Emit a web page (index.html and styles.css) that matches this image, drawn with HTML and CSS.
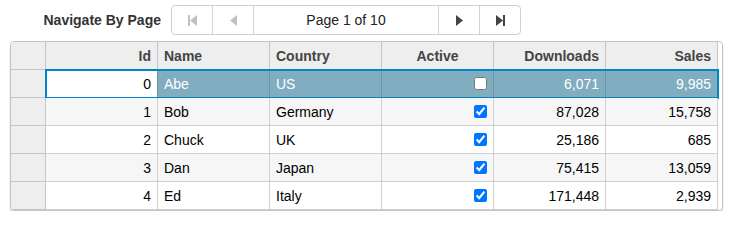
FILE: index.html
```html
<!DOCTYPE html>
<html lang="en">
<head>
<meta charset="utf-8">
<title>FlexGrid paging</title>
<link rel="stylesheet" href="styles.css">
</head>
<body>
<div class="toolbar">
  <div class="label">Navigate By Page</div>
  <div class="pager">
    <button class="btn disabled" type="button" aria-label="First page">
      <svg width="9" height="11" viewBox="0 0 9 11"><rect x="0" y="0" width="2" height="11"/><polygon points="9,0 9,11 2,5.5"/></svg>
    </button>
    <button class="btn disabled sep" type="button" aria-label="Previous page">
      <svg width="7" height="11" viewBox="0 0 7 11"><polygon points="7,0 7,11 0,5.5"/></svg>
    </button>
    <div class="page-text sep">Page 1 of 10</div>
    <button class="btn sep" type="button" aria-label="Next page">
      <svg width="7" height="11" viewBox="0 0 7 11"><polygon points="0,0 0,11 7,5.5"/></svg>
    </button>
    <button class="btn sep" type="button" aria-label="Last page">
      <svg width="9" height="11" viewBox="0 0 9 11"><polygon points="0,0 0,11 7,5.5"/><rect x="7" y="0" width="2" height="11"/></svg>
    </button>
  </div>
</div>

<div class="grid">
  <div class="row header">
    <div class="rh"></div>
    <div class="cells">
      <div class="cell r">Id</div>
      <div class="cell">Name</div>
      <div class="cell">Country</div>
      <div class="cell c">Active</div>
      <div class="cell r">Downloads</div>
      <div class="cell r">Sales</div>
    </div>
  </div>
  <div class="row">
    <div class="rh"></div>
    <div class="cells selected">
      <div class="cell r current">0</div>
      <div class="cell">Abe</div>
      <div class="cell">US</div>
      <div class="cell r"><input type="checkbox"></div>
      <div class="cell r">6,071</div>
      <div class="cell r">9,985</div>
    </div>
  </div>
  <div class="row alt">
    <div class="rh"></div>
    <div class="cells">
      <div class="cell r">1</div>
      <div class="cell">Bob</div>
      <div class="cell">Germany</div>
      <div class="cell r"><input type="checkbox" checked></div>
      <div class="cell r">87,028</div>
      <div class="cell r">15,758</div>
    </div>
  </div>
  <div class="row">
    <div class="rh"></div>
    <div class="cells">
      <div class="cell r">2</div>
      <div class="cell">Chuck</div>
      <div class="cell">UK</div>
      <div class="cell r"><input type="checkbox" checked></div>
      <div class="cell r">25,186</div>
      <div class="cell r">685</div>
    </div>
  </div>
  <div class="row alt">
    <div class="rh"></div>
    <div class="cells">
      <div class="cell r">3</div>
      <div class="cell">Dan</div>
      <div class="cell">Japan</div>
      <div class="cell r"><input type="checkbox" checked></div>
      <div class="cell r">75,415</div>
      <div class="cell r">13,059</div>
    </div>
  </div>
  <div class="row">
    <div class="rh"></div>
    <div class="cells">
      <div class="cell r">4</div>
      <div class="cell">Ed</div>
      <div class="cell">Italy</div>
      <div class="cell r"><input type="checkbox" checked></div>
      <div class="cell r">171,448</div>
      <div class="cell r">2,939</div>
    </div>
  </div>
</div>
</body>
</html>
```

FILE: styles.css
```css
html, body {
  margin: 0;
  padding: 0;
  background: #fff;
}

body {
  font-family: "Liberation Sans", Arial, sans-serif;
  font-size: 14px;
  color: #000;
}

.toolbar {
  display: flex;
  align-items: center;
  margin-top: 5px;
  height: 30px;
}

.label {
  width: 161px;
  text-align: right;
  font-weight: bold;
  color: #333;
}

.pager {
  display: flex;
  margin-left: 10px;
  height: 30px;
  box-sizing: border-box;
  border: 1px solid #cfcfcf;
  border-radius: 4px;
  background: #fff;
}

.btn {
  width: 40px;
  height: 28px;
  margin: 0;
  padding: 0;
  border: none;
  background: transparent;
  display: flex;
  align-items: center;
  justify-content: center;
  color: #444;
  box-sizing: border-box;
}

.btn svg {
  fill: currentColor;
  display: block;
}

.btn.disabled {
  color: #c2c2c2;
}

.sep {
  border-left: 1px solid #d4d4d4;
}

.btn.sep {
  width: 41px;
}

.page-text {
  width: 185px;
  box-sizing: border-box;
  display: flex;
  align-items: center;
  justify-content: center;
  color: #222;
}

.grid {
  margin: 6px 0 0 10px;
  width: 713px;
  box-sizing: border-box;
  border: 1px solid #c4c4c4;
  border-radius: 4px;
  box-shadow: 0 2px 2px rgba(0, 0, 0, 0.15);
  overflow: hidden;
  background: #fff;
}

.row {
  display: flex;
  height: 28px;
}

.rh {
  width: 35px;
  box-sizing: border-box;
  background: #eee;
  border-right: 1px solid #c6c6c6;
  border-bottom: 1px solid #c6c6c6;
}

.cells {
  display: flex;
}

.cell {
  width: 112px;
  height: 28px;
  box-sizing: border-box;
  padding: 0 6px;
  border-right: 1px solid #cfcfcf;
  border-bottom: 1px solid #cfcfcf;
  display: flex;
  align-items: center;
  justify-content: flex-start;
  white-space: nowrap;
}

.cell.r {
  justify-content: flex-end;
}

.cell.c {
  justify-content: center;
}

.header .cell {
  background: #eee;
  font-weight: bold;
  color: #444;
  border-color: #c6c6c6;
}

.alt .cell {
  background: #f6f6f6;
}

.cells.selected {
  outline: 2px solid #0085c7;
  outline-offset: -1px;
}

.selected .cell {
  background: #80adbf;
  color: #fff;
  border-right-color: #6c95a5;
  border-bottom-color: #6c95a5;
}

.selected .cell.current {
  background: #fff;
  color: #000;
}

.cell input {
  margin: 0;
  width: 13px;
  height: 13px;
}
```
